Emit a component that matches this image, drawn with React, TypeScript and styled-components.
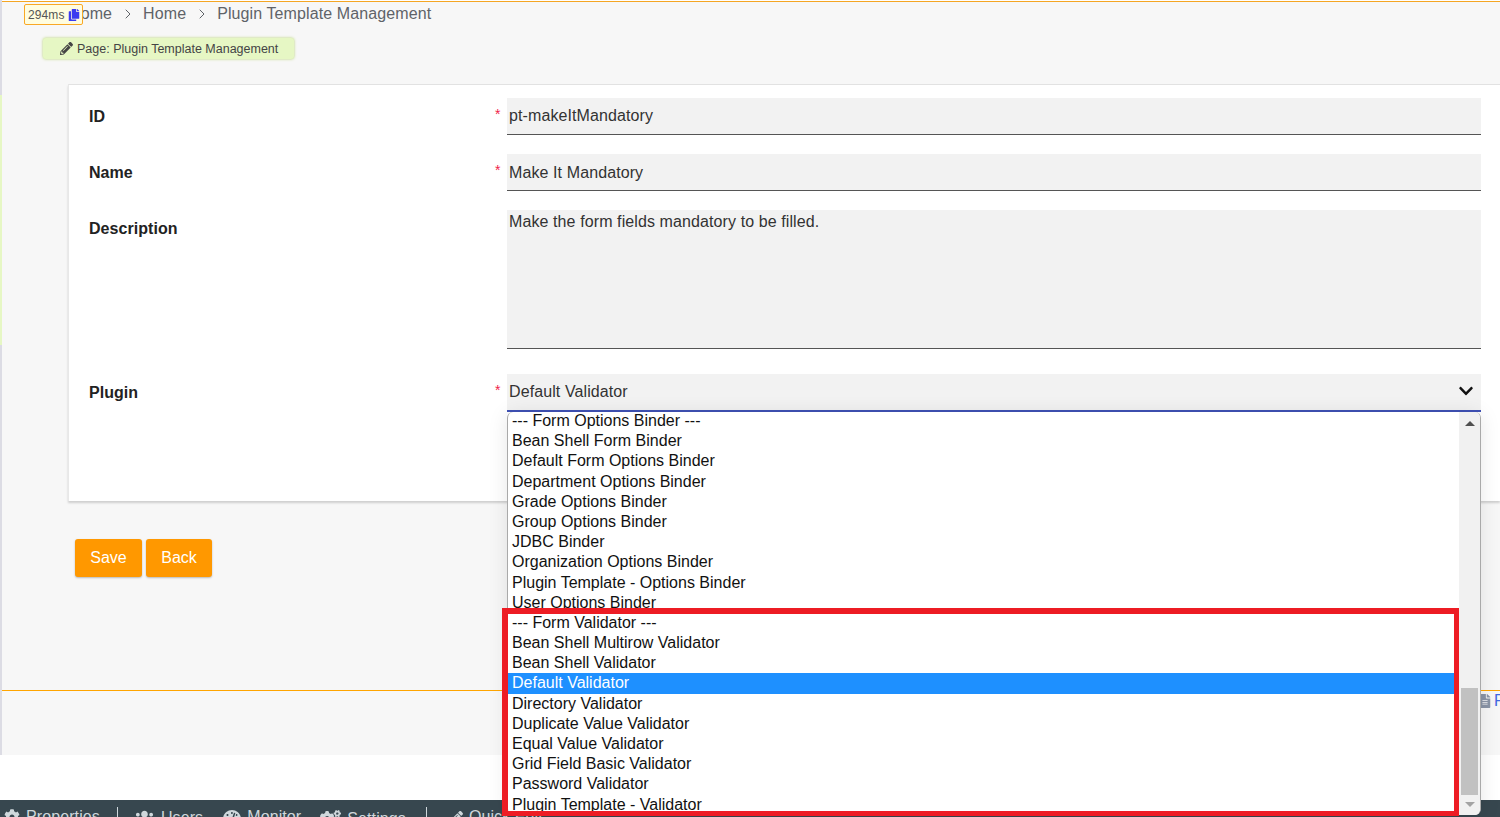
import React from "react";
import styled, { createGlobalStyle } from "styled-components";
import { FaPencilAlt, FaCog, FaUsers, FaTachometerAlt, FaCogs, FaFileAlt, FaCopy, FaChevronDown } from "react-icons/fa";
import { ChevronRight } from "lucide-react";

const Global = createGlobalStyle`
  html, body { margin: 0; padding: 0; height: 817px; overflow: hidden; background: #fff; }
  body { font-family: "Liberation Sans", Arial, sans-serif; }
  #root { height: 817px; }
`;

const Page = styled.div`
  position: relative;
  width: 1500px;
  height: 817px;
  padding-top: 1px;
  box-sizing: border-box;
  overflow: hidden;
  display: flex;
  flex-direction: column;
  background: #fff;
`;

const Main = styled.div`
  height: 754px;
  flex: none;
  box-sizing: border-box;
  margin-left: 2px;
  border-top: 1px solid #f5a623;
  background: #f7f7f7;
  display: flex;
  flex-direction: column;
`;

const LeftEdge = styled.div`
  position: absolute;
  left: 0;
  top: 0;
  width: 2px;
  height: 755px;
  background: #dcdce4;
  &::after {
    content: "";
    position: absolute;
    left: 0;
    top: 95px;
    width: 2px;
    height: 250px;
    background: #e6f7c4;
  }
`;

const Breadcrumb = styled.div`
  height: 24px;
  flex: none;
  display: flex;
  align-items: center;
  padding-left: 67px;
  font-size: 16px;
  letter-spacing: 0.1px;
  color: #5f6368;
`;

const Chevron = styled.span`
  width: 31px;
  display: flex;
  justify-content: center;
  color: #5f6368;
`;

const Timer = styled.div`
  position: absolute;
  left: 24px;
  top: 4px;
  width: 59px;
  height: 21px;
  box-sizing: border-box;
  display: flex;
  align-items: center;
  gap: 3px;
  padding-left: 3px;
  border: 1px solid #f9a825;
  border-radius: 2px;
  background: #fffde0;
  color: #555;
  font-size: 12px;
  letter-spacing: 0.1px;
  white-space: nowrap;
  svg { color: #3b3bf0; flex: none; }
`;

const PageTag = styled.div`
  align-self: flex-start;
  flex: none;
  margin: 12px 0 0 41px;
  width: 251px;
  height: 21px;
  box-sizing: border-box;
  display: flex;
  align-items: center;
  gap: 4px;
  padding-left: 17px;
  border-radius: 3px;
  background: #e6f7c4;
  box-shadow: 0 0 3px #b5d26e;
  color: #444;
  font-size: 12.5px;
  svg { color: #444; }
`;

const Card = styled.div`
  margin: 25px 0 0 66px;
  height: 417px;
  flex: none;
  box-sizing: border-box;
  background: #fff;
  border-top: 1px solid #e2e2e2;
  border-left: 1px solid #e8e8e8;
  box-shadow: 0 2px 2px rgba(0,0,0,.16);
  padding: 13px 0 0 20px;
  display: flex;
  flex-direction: column;
`;

const FormRow = styled.div<{ $h: number }>`
  height: ${(p) => p.$h}px;
  display: grid;
  grid-template-columns: 406px 12px 974px;
  flex: none;
`;

const Label = styled.div`
  font-size: 16px;
  font-weight: bold;
  letter-spacing: 0.05px;
  color: #222;
  padding-top: 10px;
`;

const Star = styled.div`
  color: #f0244a;
  font-size: 14px;
  padding-top: 8px;
`;

const Field = styled.div<{ $h: number; $pad?: number; $focus?: boolean }>`
  height: ${(p) => p.$h}px;
  box-sizing: border-box;
  background: #f2f2f2;
  border-bottom: ${(p) => (p.$focus ? "2px solid #3f51b5" : "1px solid #555")};
  padding: ${(p) => p.$pad ?? 9}px 2px 0;
  font-size: 16px;
  letter-spacing: 0.1px;
  color: #333;
  position: relative;
`;

const Arrow = styled.span`
  position: absolute;
  right: 7px;
  top: 9px;
  color: #111;
  display: flex;
`;

const Actions = styled.div`
  margin: 38px 0 0 73px;
  flex: none;
  display: flex;
  gap: 4px;
`;

const Btn = styled.div<{ $w: number }>`
  width: ${(p) => p.$w}px;
  height: 38px;
  border-radius: 3px;
  background: #ff9800;
  color: #fff;
  font-size: 16px;
  display: flex;
  align-items: center;
  justify-content: center;
  box-shadow: 0 1px 2px rgba(0,0,0,.25);
`;

const Spacer = styled.div`
  flex: none;
  height: 113px;
`;

const FooterRule = styled.div`
  flex: 1;
  border-top: 1px solid #ffa500;
  position: relative;
`;

const FooterLink = styled.div`
  position: absolute;
  left: 1476px;
  top: 0;
  height: 20px;
  display: flex;
  align-items: center;
  gap: 2px;
  color: #4169e1;
  font-size: 16px;
  white-space: nowrap;
  svg { color: #8a94a6; }
`;

const White = styled.div`
  flex: 1;
  background: #fff;
`;

const BottomBar = styled.div`
  height: 17px;
  flex: none;
  background: #37474f;
  display: flex;
  align-items: flex-start;
  padding: 8px 0 0 4px;
  box-sizing: border-box;
  overflow: hidden;
  color: #cfd8dc;
  font-size: 16px;
  letter-spacing: 0.1px;
`;

const BarItem = styled.span<{ $gap: number; $icon: number }>`
  display: inline-flex;
  align-items: center;
  gap: ${(p) => p.$icon}px;
  margin-right: ${(p) => p.$gap}px;
  line-height: 18px;
  white-space: nowrap;
`;

const BarSep = styled.span<{ $gap: number }>`
  width: 1px;
  height: 16px;
  margin-top: -1px;
  background: #cfd8dc;
  margin-right: ${(p) => p.$gap}px;
`;

const Dropdown = styled.div`
  position: absolute;
  left: 507px;
  top: 412px;
  width: 974px;
  height: 403px;
  box-sizing: border-box;
  background: #fff;
  border-left: 1px solid #a9a9a9;
  border-right: 1px solid #a9a9a9;
  border-radius: 6px;
  display: flex;
  overflow: hidden;
  box-shadow: 0 2px 20px rgba(0,0,0,.1);
`;

const List = styled.div`
  flex: 1;
  margin-top: -1px;
`;

const Opt = styled.div<{ $sel?: boolean }>`
  height: 20.2px;
  line-height: 19px;
  padding-left: 4px;
  font-size: 16px;
  white-space: nowrap;
  color: ${(p) => (p.$sel ? "#fff" : "#111")};
  background: ${(p) => (p.$sel ? "#1e90ff" : "transparent")};
`;

const Scroll = styled.div`
  width: 21px;
  flex: none;
  background: #f1f1f1;
  position: relative;
`;

const Thumb = styled.div`
  position: absolute;
  left: 2px;
  right: 2px;
  top: 276px;
  height: 107px;
  background: #c1c1c1;
`;

const Tri = styled.div<{ $up?: boolean; $c: string }>`
  position: absolute;
  left: 6px;
  ${(p) => (p.$up ? "top: 9px;" : "bottom: 8px;")}
  width: 0;
  height: 0;
  border-left: 5px solid transparent;
  border-right: 5px solid transparent;
  ${(p) => (p.$up ? `border-bottom: 5px solid ${p.$c};` : `border-top: 5px solid ${p.$c};`)}
`;

const RedBox = styled.div`
  position: absolute;
  left: 502px;
  top: 608px;
  width: 957px;
  height: 208px;
  box-sizing: border-box;
  border: 5px solid #ed1c24;
  border-width: 6px 5px 5px 6px;
  pointer-events: none;
`;

const options = [
  "--- Form Options Binder ---",
  "Bean Shell Form Binder",
  "Default Form Options Binder",
  "Department Options Binder",
  "Grade Options Binder",
  "Group Options Binder",
  "JDBC Binder",
  "Organization Options Binder",
  "Plugin Template - Options Binder",
  "User Options Binder",
  "--- Form Validator ---",
  "Bean Shell Multirow Validator",
  "Bean Shell Validator",
  "Default Validator",
  "Directory Validator",
  "Duplicate Value Validator",
  "Equal Value Validator",
  "Grid Field Basic Validator",
  "Password Validator",
  "Plugin Template - Validator",
];

export default function App() {
  return (
    <Page>
      <Global />
      <Main>
        <Breadcrumb>
          <span>Home</span>
          <Chevron><ChevronRight size={16} strokeWidth={1.5} /></Chevron>
          <span>Home</span>
          <Chevron><ChevronRight size={16} strokeWidth={1.5} /></Chevron>
          <span>Plugin Template Management</span>
        </Breadcrumb>
        <PageTag>
          <FaPencilAlt size={13} />
          Page: Plugin Template Management
        </PageTag>
        <Card>
          <FormRow $h={56}>
            <Label>ID</Label>
            <Star>*</Star>
            <Field $h={37}>pt-makeItMandatory</Field>
          </FormRow>
          <FormRow $h={56}>
            <Label>Name</Label>
            <Star>*</Star>
            <Field $h={37} $pad={10}>Make It Mandatory</Field>
          </FormRow>
          <FormRow $h={164}>
            <Label>Description</Label>
            <div />
            <Field $h={139} $pad={3}>Make the form fields mandatory to be filled.</Field>
          </FormRow>
          <FormRow $h={38}>
            <Label>Plugin</Label>
            <Star>*</Star>
            <Field $h={38} $focus>
              Default Validator
              <Arrow>
                <FaChevronDown size={16} />
              </Arrow>
            </Field>
          </FormRow>
        </Card>
        <Actions>
          <Btn $w={67}>Save</Btn>
          <Btn $w={66}>Back</Btn>
        </Actions>
        <Spacer />
        <FooterRule>
          <FooterLink>
            <FaFileAlt size={14} />F
          </FooterLink>
        </FooterRule>
      </Main>
      <White />
      <BottomBar>
        <BarItem $gap={17} $icon={6}><FaCog size={16} />Properties</BarItem>
        <BarSep $gap={17} />
        <BarItem $gap={20} $icon={7}><FaUsers size={19} />Users</BarItem>
        <BarItem $gap={19} $icon={6}><FaTachometerAlt size={18} />Monitor</BarItem>
        <BarItem $gap={20} $icon={6}><FaCogs size={21} />Settings</BarItem>
        <BarSep $gap={23} />
        <BarItem $gap={0} $icon={6}><FaPencilAlt size={13} />Quick Edit</BarItem>
      </BottomBar>
      <LeftEdge />
      <Timer>
        294ms
        <FaCopy size={12} />
      </Timer>
      <Dropdown>
        <List>
          {options.map((o) => (
            <Opt key={o} $sel={o === "Default Validator"}>{o}</Opt>
          ))}
        </List>
        <Scroll>
          <Tri $up $c="#505050" />
          <Thumb />
          <Tri $c="#a3a3a3" />
        </Scroll>
      </Dropdown>
      <RedBox />
    </Page>
  );
}
